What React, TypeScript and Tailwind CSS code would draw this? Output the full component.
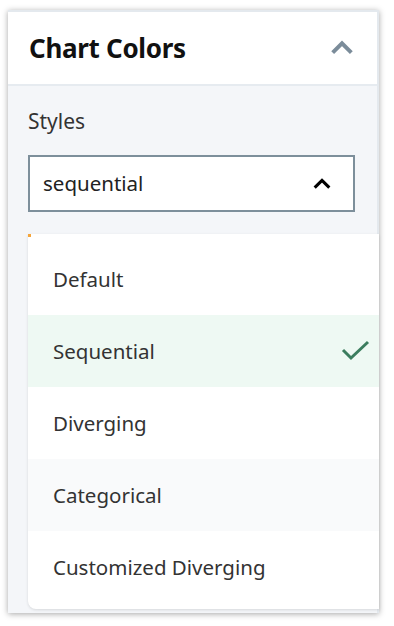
import { useState } from "react";

const options = ["Default", "Sequential", "Diverging", "Categorical", "Customized Diverging"];

function ChevronUp({ className }: { className?: string }) {
  return (
    <svg viewBox="0 0 24 24" className={className} fill="none" stroke="currentColor" strokeWidth={3.4} strokeLinecap="butt" strokeLinejoin="miter">
      <path d="M4 16 L12 8 L20 16" />
    </svg>
  );
}

export default function App() {
  const [selected, setSelected] = useState("Sequential");

  return (
    <div className="min-h-[626px] bg-white pt-[10px] pl-[8px]" style={{ fontFamily: "'Noto Sans', 'Open Sans', sans-serif" }}>
      <div className="relative flex h-[603px] w-[371px] flex-col border-t-2 border-r-2 border-[#e4e9ee] shadow-[0_1px_6px_rgba(0,0,0,0.35)]">
        {/* header */}
        <div className="flex h-[74px] items-center justify-between border-b-2 border-[#e6ebf0] bg-white pl-[21px] pr-[21px]">
          <h2 className="text-[26px] font-bold tracking-[-0.3px] text-[#111]">Chart Colors</h2>
          <ChevronUp className="h-[28px] w-[28px] text-[#7b8c9a]" />
        </div>

        {/* body */}
        <div className="flex-1 bg-[#f4f6f9] px-[20px] pt-[21px]">
          <div className="text-[21px] leading-[28px] text-[#333]">Styles</div>
          <button className="mt-[20px] flex h-[57px] w-[327px] items-center justify-between border-2 border-[#7d8f9b] bg-white pl-[13px] pr-[20px] text-left">
            <span className="text-[20.5px] text-[#222]">sequential</span>
            <ChevronUp className="h-[22px] w-[22px] text-black" />
          </button>
        </div>

        {/* open menu */}
        <ul className="absolute left-[20px] right-[-2px] top-[222px] rounded-bl-[8px] bg-white pt-[9px] pb-[6px] shadow-[0_1px_3px_rgba(0,0,0,0.12)]">
          <div className="absolute left-0 top-0 h-[3px] w-[3px] bg-[#f5a53a]" />
          {options.map((o) => {
            const active = o === selected;
            return (
              <li
                key={o}
                onClick={() => setSelected(o)}
                className={`flex h-[72px] items-center justify-between pl-[25px] pr-[8px] text-[20.5px] text-[#333] ${
                  active ? "bg-[#eef9f3]" : o === "Categorical" ? "bg-[#f9fafb]" : ""
                }`}
              >
                <span>{o}</span>
                {active && (
                  <svg viewBox="0 0 30 24" className="h-[24px] w-[30px] text-[#3b7d5e]" fill="none" stroke="currentColor" strokeWidth={3}>
                    <path d="M2 11 L10 19 L27 3" />
                  </svg>
                )}
              </li>
            );
          })}
        </ul>
      </div>
    </div>
  );
}
